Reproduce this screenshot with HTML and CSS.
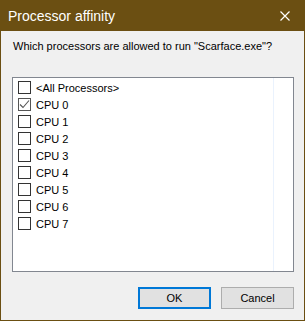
FILE: index.html
```html
<!DOCTYPE html>
<html>
<head>
  <meta charset="UTF-8" />
  <title>Processor affinity</title>
  <link rel="stylesheet" href="styles.css">
</head>
<body>
  <div class="window">
    <div class="title-bar">
      <span class="title">Processor affinity</span>
      <span class="close">
        <svg width="10" height="10" viewBox="0 0 10 10">
          <path d="M0.5 0.5 L9.5 9.5 M9.5 0.5 L0.5 9.5" stroke="#fff" stroke-width="1.2" fill="none" />
        </svg>
      </span>
    </div>
    <div class="content">
      <p class="question">Which processors are allowed to run "Scarface.exe"?</p>
      <div class="list">
        <div class="column" id="cpu-list"></div>
      </div>
      <div class="buttons">
        <button class="btn default">OK</button>
        <button class="btn">Cancel</button>
      </div>
    </div>
  </div>

  <script>
    // Processor rows; only CPU 0 is allowed
    const processors = ["<All Processors>", "CPU 0", "CPU 1", "CPU 2", "CPU 3", "CPU 4", "CPU 5", "CPU 6", "CPU 7"];
    const checked = ["CPU 0"];

    const list = document.getElementById("cpu-list");
    processors.forEach(name => {
      const row = document.createElement("div");
      row.className = "row";
      const box = document.createElement("span");
      box.className = "box" + (checked.includes(name) ? " checked" : "");
      if (checked.includes(name)) {
        box.innerHTML = '<svg width="11" height="11" viewBox="0 0 11 11"><path d="M1 5.5 L4 8.5 L10 1.5" stroke="#555" stroke-width="1.1" fill="none"/></svg>';
      }
      const label = document.createElement("span");
      label.className = "label";
      label.textContent = name;
      row.appendChild(box);
      row.appendChild(label);
      list.appendChild(row);
    });
  </script>
</body>
</html>
```

FILE: styles.css
```css
body {
  margin: 0;
  font-family: "Liberation Sans", Arial, sans-serif;
  font-size: 11px;
}
.window {
  width: 303px;
  height: 320px;
  border: 1px solid #6b4f12;
  border-top: none;
  background-color: #f0f0f0;
  display: flex;
  flex-direction: column;
}
.title-bar {
  height: 31px;
  background-color: #6b4f12;
  color: #fff;
  display: flex;
  align-items: center;
  justify-content: space-between;
  padding: 0 10px 0 8px;
  margin: 0 -1px;
}
.title {
  font-size: 14px;
  padding-top: 1px;
}
.close {
  display: flex;
  margin-right: 5px;
}
.content {
  flex: 1;
  padding: 0 10px 11px 11px;
  display: flex;
  flex-direction: column;
}
.question {
  margin: 8px 0 0 1px;
  line-height: 15px;
  white-space: nowrap;
  color: #000;
}
.list {
  margin-top: 23px;
  height: 193px;
  border: 1px solid #828790;
  background-color: #fff;
  display: flex;
}
.column {
  width: 260px;
  border-right: 1px solid #eaf2fd;
  padding-top: 1px;
}
.row {
  height: 17px;
  display: flex;
  align-items: center;
  padding-left: 5px;
}
.box {
  width: 11px;
  height: 11px;
  border: 1px solid #333;
  background-color: #fff;
  display: flex;
}
.box.checked {
  border-color: #555;
}
.label {
  margin-left: 5px;
  color: #000;
}
.buttons {
  margin-top: auto;
  display: flex;
  justify-content: flex-end;
  gap: 10px;
}
.btn {
  width: 73px;
  height: 22px;
  font-family: "Liberation Sans", Arial, sans-serif;
  font-size: 11px;
  color: #000;
  background-color: #e1e1e1;
  border: 1px solid #adadad;
  padding: 0;
}
.btn.default {
  border: 2px solid #0078d7;
}
```
